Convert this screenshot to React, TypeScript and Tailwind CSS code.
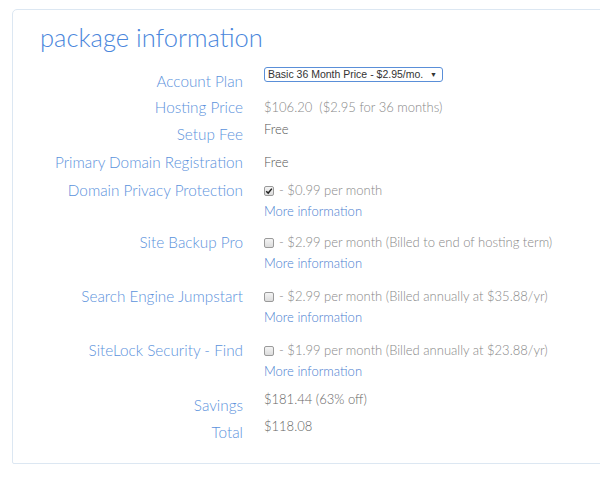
const font = { fontFamily: 'Lato, "Noto Sans", sans-serif' };

type Row = {
  label: string;
  h: string;
  labelPad: string;
  valuePad: string;
  value: React.ReactNode;
};

const Check = ({ checked }: { checked?: boolean }) => (
  <span className="inline-flex items-center justify-center w-[10px] h-[10px] border border-[#9a9a9a] rounded-[2px] bg-gradient-to-b from-[#f4f4f4] to-[#dcdcdc] mr-[5px] relative top-[1px]">
    {checked && (
      <svg viewBox="0 0 10 10" className="w-[8px] h-[8px]">
        <path d="M1.5 5.2 L4 7.6 L8.6 2" fill="none" stroke="#222" strokeWidth="1.8" />
      </svg>
    )}
  </span>
);

const Addon = ({ checked, text }: { checked?: boolean; text: string }) => (
  <div>
    <div className="h-[20px] leading-[20px] flex items-center">
      <Check checked={checked} />
      <span>{text}</span>
    </div>
    <div className="h-[20px] leading-[20px] mt-[1px] text-[#4a80d0]">More information</div>
  </div>
);

const rows: Row[] = [
  {
    label: 'Account Plan',
    h: 'h-[35px]',
    labelPad: 'pt-[9px]',
    valuePad: 'pt-[5px]',
    value: (
      <div
        className="w-[179px] h-[15px] border border-[#5a8fd8] rounded-[3px] flex items-center justify-between pl-[3px] pr-[5px] text-[10.5px] leading-[13px] whitespace-nowrap text-[#333]"
        style={{ fontFamily: '"Liberation Sans", Arial, sans-serif' }}
      >
        <span>Basic 36 Month Price - $2.95/mo.</span>
        <span className="text-[7px]">▼</span>
      </div>
    ),
  },
  {
    label: 'Hosting Price',
    h: 'h-[22px]',
    labelPad: 'pt-0',
    valuePad: 'pt-0',
    value: <span className="leading-[20px]">$106.20&nbsp;&nbsp;($2.95 for 36 months)</span>,
  },
  {
    label: 'Setup Fee',
    h: 'h-[33px]',
    labelPad: 'pt-[5px]',
    valuePad: 'pt-0',
    value: <span className="leading-[20px] text-[#555]">Free</span>,
  },
  {
    label: 'Primary Domain Registration',
    h: 'h-[28px]',
    labelPad: 'pt-0',
    valuePad: 'pt-0',
    value: <span className="leading-[20px] text-[#555]">Free</span>,
  },
  {
    label: 'Domain Privacy Protection',
    h: 'h-[52px]',
    labelPad: 'pt-0',
    valuePad: 'pt-0',
    value: <Addon checked text="- $0.99 per month" />,
  },
  {
    label: 'Site Backup Pro',
    h: 'h-[54px]',
    labelPad: 'pt-0',
    valuePad: 'pt-0',
    value: <Addon text="- $2.99 per month (Billed to end of hosting term)" />,
  },
  {
    label: 'Search Engine Jumpstart',
    h: 'h-[54px]',
    labelPad: 'pt-0',
    valuePad: 'pt-0',
    value: <Addon text="- $2.99 per month (Billed annually at $35.88/yr)" />,
  },
  {
    label: 'SiteLock Security - Find',
    h: 'h-[49px]',
    labelPad: 'pt-0',
    valuePad: 'pt-0',
    value: <Addon text="- $1.99 per month (Billed annually at $23.88/yr)" />,
  },
  {
    label: 'Savings',
    h: 'h-[27px]',
    labelPad: 'pt-[6px]',
    valuePad: 'pt-0',
    value: <span className="leading-[20px] text-[#666]">$181.44 (63% off)</span>,
  },
  {
    label: 'Total',
    h: 'h-[47px]',
    labelPad: 'pt-[6px]',
    valuePad: 'pt-0',
    value: <span className="leading-[20px] text-[#666]">$118.08</span>,
  },
];

export default function App() {
  return (
    <div className="w-[600px] h-[492px] overflow-hidden bg-white" style={font}>
      <div className="ml-[12px] mt-[9px] w-[640px] border border-[#dce7f2] rounded-tl-[5px] rounded-bl-[2px]">
        <h1 className="ml-[27px] mt-[10px] h-[42px] text-[25.5px] leading-[34px] font-light text-[#4a86dc]">
          package information
        </h1>
        {rows.map((r) => (
          <div key={r.label} className={`flex ${r.h}`}>
            <div className={`w-[230px] text-right text-[15.3px] leading-[20px] font-light text-[#5b92dc] ${r.labelPad}`}>
              {r.label}
            </div>
            <div className={`ml-[21px] text-[13px] font-light text-[#888] ${r.valuePad}`}>{r.value}</div>
          </div>
        ))}
      </div>
    </div>
  );
}
